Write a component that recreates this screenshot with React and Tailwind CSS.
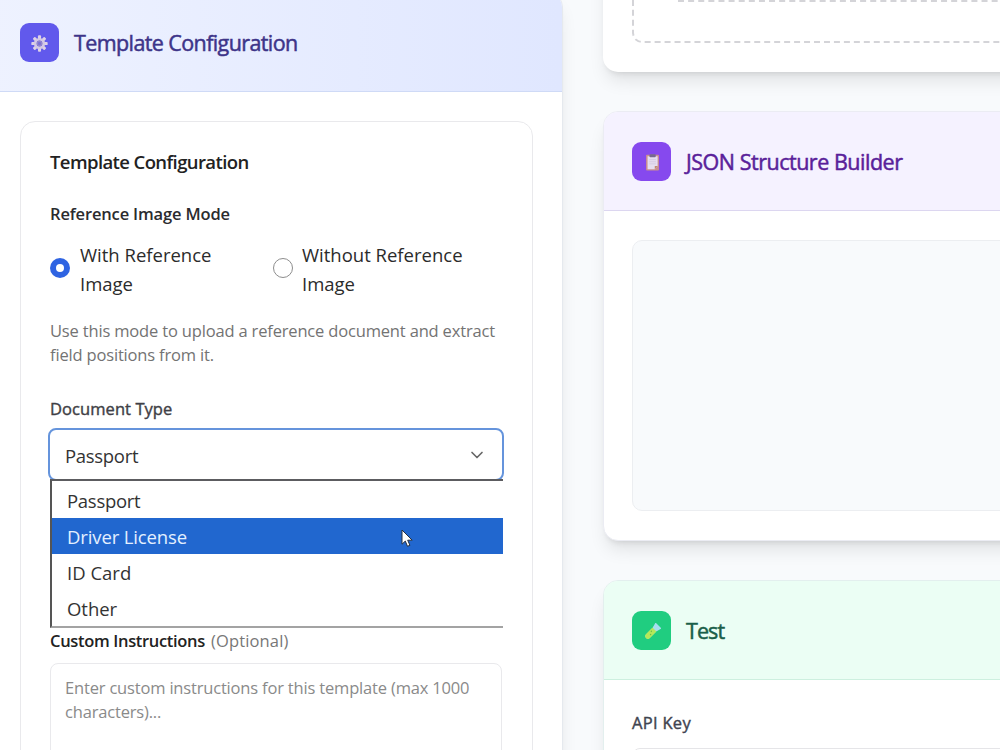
import { ChevronDown } from "lucide-react";

function GearIcon() {
  const teeth = [0, 45, 90, 135, 180, 225, 270, 315];
  return (
    <svg viewBox="-10 -10 20 20" className="mt-[3px] size-[17px]">
      {teeth.map((a) => (
        <rect key={a} x="-1.8" y="-9.6" width="3.6" height="5" rx="1" fill="#ddd2e6" transform={`rotate(${a})`} />
      ))}
      <circle r="5" fill="none" stroke="#d3c8e4" strokeWidth="3.2" />
      <circle r="2.6" fill="#7a6fd8" stroke="#9a8cc4" strokeWidth="1.2" />
    </svg>
  );
}

function ClipboardIcon() {
  return (
    <svg viewBox="0 0 20 20" className="mt-[2px] ml-[1px] size-[19px]">
      <rect x="3.2" y="1.8" width="13.6" height="16.6" rx="1" fill="#c98f90" />
      <path d="M4.8 3.4h10.6v10.4l-3 3.2H4.8z" fill="#e6def0" />
      <path d="M15.4 13.8l-3 3.2v-3.2z" fill="#c08a72" />
      <rect x="6.8" y="1.2" width="6.6" height="3.4" rx="0.8" fill="#76698f" />
      <path d="M6.6 7h7M6.6 9.2h7M6.6 11.4h7" stroke="#cdc2de" strokeWidth="0.7" />
    </svg>
  );
}

function TestTubeIcon() {
  return (
    <svg viewBox="0 0 20 20" className="mt-[4px] ml-[1px] size-[18px]">
      <g transform="rotate(45 10 10)">
        <rect x="7" y="2" width="6" height="17.4" rx="3" fill="#a9e8a0" />
        <path d="M7 6.5h6v9.9a3 3 0 0 1-6 0z" fill="#b4e85a" />
        <path d="M5.4 -0.2h9.2l-1.6 6H7z" fill="#a6dff0" />
        <circle cx="9" cy="10" r="0.8" fill="#6cc04a" />
        <circle cx="10.8" cy="13" r="0.8" fill="#6cc04a" />
      </g>
    </svg>
  );
}

function Pointer() {
  return (
    <svg viewBox="0 0 12 19" className="absolute top-[48px] left-[349px] h-[19px] w-[12px]">
      <path d="M1 1v14.2l3.3-3.1 2.2 5.2 2.4-1-2.2-5.1h4.5z" fill="#fff" stroke="#26303f" strokeWidth="1" />
    </svg>
  );
}

const options = [
  { label: "Passport", style: "text-[#333] tracking-[-0.28px]" },
  { label: "Driver License", style: "bg-[#2167cf] text-[#e4f0ff] tracking-[-0.13px]" },
  { label: "ID Card", style: "text-[#333]" },
  { label: "Other", style: "text-[#333] tracking-[-0.05px]" },
];

export default function App() {
  return (
    <div className="flex h-[750px] w-[1000px] overflow-hidden bg-[#f8fafc] font-['Open_Sans','Noto_Sans',sans-serif] text-[#222]">
      <section className="-mt-2 -ml-[9px] h-[790px] w-[572px] shrink-0 overflow-hidden rounded-[15px] border border-[#e5e9ee] bg-white shadow-[0_12px_18px_-4px_rgba(0,0,0,0.1),0_5px_7px_-5px_rgba(0,0,0,0.1)]">
        <header className="flex h-[99px] items-center gap-[15px] border-b border-[#cfdaf6] bg-linear-to-r from-[#eef2ff] to-[#e0e7ff] px-[28px]">
          <span className="flex size-[39px] items-center justify-center rounded-[9px] bg-[#6159ec]">
            <GearIcon />
          </span>
          <h2 className="pt-[2px] text-[21.5px] tracking-[-0.6px] text-[#3d3489] [-webkit-text-stroke:0.5px_#3d3489]">Template Configuration</h2>
        </header>
        <div className="pt-[29px] pr-[29px] pl-[28px]">
          <div className="h-[700px] rounded-[15px] border-[1.5px] border-[#e9e9ec] px-[30px] pt-[28px]">
            <h3 className="-ml-px text-[18.5px] leading-[24px] font-semibold tracking-[-0.6px]">Template Configuration</h3>
            <p className="mt-[28px] -ml-px text-[16.5px] leading-[24px] font-semibold tracking-[-0.15px] text-[#2b2b2e]">Reference Image Mode</p>
            <div className="mt-[14px] flex text-[18.5px] leading-[29.3px] text-[#2b2b2b]">
              <label className="-ml-[1px] flex w-[223px] items-center gap-[10px]">
                <span className="-mt-[2px] flex size-[20px] shrink-0 items-center justify-center rounded-full bg-[#2f64e2]">
                  <span className="size-[8px] rounded-full bg-white" />
                </span>
                <span>With Reference<br />Image</span>
              </label>
              <label className="flex items-center gap-[9px]">
                <span className="-mt-[2px] size-[20px] shrink-0 rounded-full border-[1.5px] border-[#8d8d8d]" />
                <span>Without Reference<br />Image</span>
              </label>
            </div>
            <p className="mt-[20px] -ml-px text-[16.5px] leading-[24.3px] tracking-[-0.17px] whitespace-nowrap text-[#737373]">
              Use this mode to upload a reference document and extract<br />field positions from it.
            </p>
            <p className="mt-[30px] -ml-px text-[16.5px] leading-[24px] tracking-[0.07px] text-[#3f3f46] [-webkit-text-stroke:0.4px_#3f3f46]">Document Type</p>
            <div className="relative mt-[7px]">
              <div className="-mr-[2px] -ml-[3px] flex h-[53px] items-center justify-between rounded-[8px] border-2 border-[#6594dc] px-[15px] pt-[2px] text-[18.5px] tracking-[-0.3px] text-[#333]">
                <span>Passport</span>
                <ChevronDown className="mb-[2px] size-[20px] text-[#666]" strokeWidth={2} />
              </div>
              <ul className="absolute top-[51px] -left-px z-10 w-[453px] border-t-2 border-b-2 border-l-2 border-t-[#5c5c60] border-b-[#a3a3a3] border-l-[#555] bg-white pt-[1px] text-[18.5px]">
                {options.map((o) => (
                  <li key={o.label} className={"h-[36px] pt-[1px] pl-[15px] leading-[36px] " + o.style}>{o.label}</li>
                ))}
                <Pointer />
              </ul>
            </div>
            <p className="mt-[148px] -ml-px flex gap-[6px] text-[16.5px] leading-[24px]">
              <span className="font-semibold tracking-[-0.33px]">Custom Instructions</span>
              <span className="tracking-[0.15px] text-[#777]">(Optional)</span>
            </p>
            <div className="mt-[10px] -ml-px h-[130px] rounded-[8px] border-[1.5px] border-[#e9e9ec] px-[14px] pt-[12px] text-[16.5px] leading-[24.3px] tracking-[-0.18px] whitespace-nowrap text-[#8a8a8a]">
              Enter custom instructions for this template (max 1000<br />characters)...
            </div>
          </div>
        </div>
      </section>

      <main className="-mt-[60px] ml-[40px] flex w-[500px] shrink-0 flex-col gap-[40px]">
        <section className="h-[132px] shrink-0 rounded-[15px] bg-white px-[29px] pb-[29px] shadow-[0_12px_18px_-4px_rgba(0,0,0,0.1),0_5px_7px_-5px_rgba(0,0,0,0.14)]">
          <div className="h-full rounded-[10px] border-2 border-dashed border-[#d4d4d8] px-[44px] pb-[39px]">
            <div className="h-full border-b-2 border-dashed border-[#d4d4d8]" />
          </div>
        </section>

        <section className="-mt-[1px] h-[430px] shrink-0 overflow-hidden rounded-[15px] border border-[#ebecf3] bg-white shadow-[0_12px_18px_-4px_rgba(0,0,0,0.1),0_5px_7px_-5px_rgba(0,0,0,0.14)]">
          <header className="flex h-[99px] items-center gap-[15px] border-b border-[#dcd6f0] bg-[#f5f2ff] px-[28px]">
            <span className="flex size-[39px] items-center justify-center rounded-[9px] bg-[#8649ee]">
              <ClipboardIcon />
            </span>
            <h2 className="pt-[2px] text-[21.5px] tracking-[-0.48px] text-[#5a1f9a] [-webkit-text-stroke:0.5px_#5a1f9a]">JSON Structure Builder</h2>
          </header>
          <div className="px-[28px] pt-[29px]">
            <div className="h-[271px] rounded-[10px] border border-[#eceef1] bg-[#f8fafc]" />
          </div>
        </section>

        <section className="-mt-[1px] h-[300px] shrink-0 overflow-hidden rounded-[15px] border border-[#e3efee] bg-white shadow-[0_12px_18px_-4px_rgba(0,0,0,0.1)]">
          <header className="flex h-[99px] items-center gap-[15px] border-b border-[#cdf0df] bg-[#ebfef4] px-[28px]">
            <span className="flex size-[39px] items-center justify-center rounded-[9px] bg-[#20cd80]">
              <TestTubeIcon />
            </span>
            <h2 className="pt-[2px] text-[21.5px] tracking-[-0.9px] text-[#1a5f49] [-webkit-text-stroke:0.5px_#1a5f49]">Test</h2>
          </header>
          <div className="px-[28px] pt-[31px]">
            <p className="text-[16.5px] leading-[24px] tracking-[0.3px] text-[#3f4450] [-webkit-text-stroke:0.4px_#3f4450]">API Key</p>
            <div className="mt-[13px] h-[50px] rounded-[8px] border-[1.5px] border-[#e5e5e8]" />
          </div>
        </section>
      </main>
    </div>
  );
}
